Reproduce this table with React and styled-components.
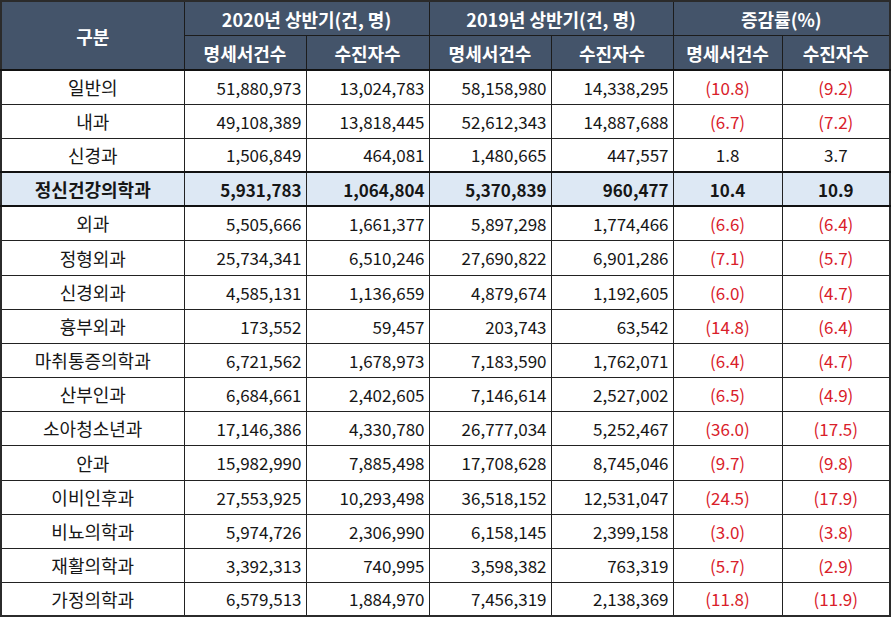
import React from "react";
import styled, { createGlobalStyle } from "styled-components";

const GlobalStyle = createGlobalStyle`
  html, body {
    margin: 0;
    padding: 0;
    background: #ffffff;
  }
  body {
    font-family: "Noto Sans CJK KR", "Noto Sans", sans-serif;
  }
`;

const Table = styled.table`
  width: 889px;
  table-layout: fixed;
  border-collapse: collapse;
  border: 2px solid #2b2b2b;
  font-size: 17px;
  color: #161616;
`;

const HeadCell = styled.th`
  background: #44546a;
  color: #ffffff;
  font-weight: 700;
  font-size: 18px;
  text-align: center;
  padding: 0;
  height: 33px;
  border: 1px solid #1c1c1c;
  border-bottom: ${(p) => (p.last ? "2px solid #111" : "1px solid #1c1c1c")};
`;

const Row = styled.tr`
  height: ${(p) => (p.tall ? "35px" : "34px")};
  background: ${(p) => (p.highlight ? "#dde8f4" : "#ffffff")};
  font-weight: ${(p) => (p.highlight ? 700 : 400)};

  & > td {
    border-top: ${(p) => (p.highlight ? "2px solid #111" : "1px solid #222")};
    border-bottom: ${(p) => (p.highlight ? "2px solid #111" : "1px solid #222")};
  }
`;

const NameCell = styled.td`
  text-align: center;
  padding: 0;
  font-size: 18px;
  border-left: 1px solid #222;
  border-right: 1px solid #222;
  white-space: nowrap;
`;

const NumCell = styled.td`
  text-align: right;
  padding: 0 4px 0 0;
  border-left: 1px solid #222;
  border-right: 1px solid #222;
  white-space: nowrap;
`;

const RateCell = styled.td`
  text-align: center;
  padding: 0;
  border-left: 1px solid #222;
  border-right: 1px solid #222;
  color: ${(p) => (p.negative ? "#d9202a" : "#161616")};
  white-space: nowrap;
`;

const rows = [
  ["일반의", "51,880,973", "13,024,783", "58,158,980", "14,338,295", "(10.8)", "(9.2)"],
  ["내과", "49,108,389", "13,818,445", "52,612,343", "14,887,688", "(6.7)", "(7.2)"],
  ["신경과", "1,506,849", "464,081", "1,480,665", "447,557", "1.8", "3.7"],
  ["정신건강의학과", "5,931,783", "1,064,804", "5,370,839", "960,477", "10.4", "10.9", true],
  ["외과", "5,505,666", "1,661,377", "5,897,298", "1,774,466", "(6.6)", "(6.4)"],
  ["정형외과", "25,734,341", "6,510,246", "27,690,822", "6,901,286", "(7.1)", "(5.7)"],
  ["신경외과", "4,585,131", "1,136,659", "4,879,674", "1,192,605", "(6.0)", "(4.7)"],
  ["흉부외과", "173,552", "59,457", "203,743", "63,542", "(14.8)", "(6.4)"],
  ["마취통증의학과", "6,721,562", "1,678,973", "7,183,590", "1,762,071", "(6.4)", "(4.7)"],
  ["산부인과", "6,684,661", "2,402,605", "7,146,614", "2,527,002", "(6.5)", "(4.9)"],
  ["소아청소년과", "17,146,386", "4,330,780", "26,777,034", "5,252,467", "(36.0)", "(17.5)"],
  ["안과", "15,982,990", "7,885,498", "17,708,628", "8,745,046", "(9.7)", "(9.8)"],
  ["이비인후과", "27,553,925", "10,293,498", "36,518,152", "12,531,047", "(24.5)", "(17.9)"],
  ["비뇨의학과", "5,974,726", "2,306,990", "6,158,145", "2,399,158", "(3.0)", "(3.8)"],
  ["재활의학과", "3,392,313", "740,995", "3,598,382", "763,319", "(5.7)", "(2.9)"],
  ["가정의학과", "6,579,513", "1,884,970", "7,456,319", "2,138,369", "(11.8)", "(11.9)"],
];

const widths = [183, 122, 123, 122, 122, 109, 108];

export default function App() {
  return (
    <>
      <GlobalStyle />
      <Table>
        <colgroup>
          {widths.map((w, i) => (
            <col key={i} style={{ width: w }} />
          ))}
        </colgroup>
        <thead>
          <tr>
            <HeadCell rowSpan={2} last>
              구분
            </HeadCell>
            <HeadCell colSpan={2}>2020년 상반기(건, 명)</HeadCell>
            <HeadCell colSpan={2}>2019년 상반기(건, 명)</HeadCell>
            <HeadCell colSpan={2}>증감률(%)</HeadCell>
          </tr>
          <tr>
            <HeadCell last>명세서건수</HeadCell>
            <HeadCell last>수진자수</HeadCell>
            <HeadCell last>명세서건수</HeadCell>
            <HeadCell last>수진자수</HeadCell>
            <HeadCell last>명세서건수</HeadCell>
            <HeadCell last>수진자수</HeadCell>
          </tr>
        </thead>
        <tbody>
          {rows.map(([name, a, b, c, d, e, f, hi], i) => (
            <Row key={name} highlight={hi} tall={i % 6 === 5}>
              <NameCell>{name}</NameCell>
              <NumCell>{a}</NumCell>
              <NumCell>{b}</NumCell>
              <NumCell>{c}</NumCell>
              <NumCell>{d}</NumCell>
              <RateCell negative={e.startsWith("(")}>{e}</RateCell>
              <RateCell negative={f.startsWith("(")}>{f}</RateCell>
            </Row>
          ))}
        </tbody>
      </Table>
    </>
  );
}
